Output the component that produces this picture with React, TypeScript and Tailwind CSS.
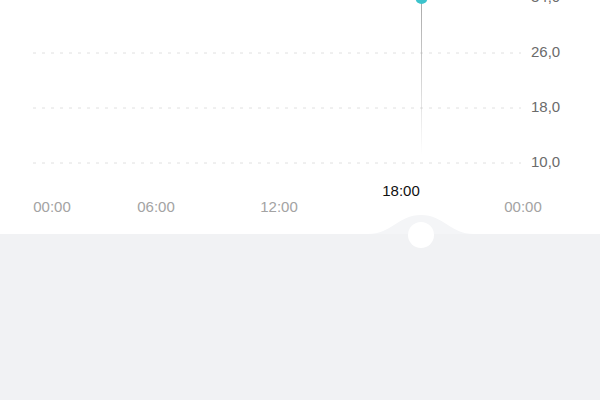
const yLabels = ['34,0', '26,0', '18,0', '10,0']

const xLabels = [
  { t: '00:00', ml: 'ml-[12px]' },
  { t: '06:00', ml: 'ml-[24px]' },
  { t: '12:00', ml: 'ml-[43px]' },
  { t: '18:00', ml: 'ml-[42px]', active: true },
  { t: '00:00', ml: 'ml-[42px]' },
]

export default function App() {
  return (
    <div className="w-[600px] h-[400px] overflow-hidden bg-white flex flex-col" style={{ fontFamily: '"Liberation Sans", Arial, sans-serif' }}>
      {/* Chart */}
      <div className="relative h-[186px] shrink-0 overflow-hidden">
        <div className="flex flex-col -mt-[30px]">
          {yLabels.map((l) => (
            <div key={l} className="h-[55px] flex items-center pl-[33px]">
              <svg width="488" height="2" className="shrink-0">
                <line x1="0" y1="1" x2="488" y2="1" stroke="#e0e0e0" strokeWidth="1" strokeDasharray="3 6" />
              </svg>
              <span className="ml-[10px] text-[15px] text-[#6b6b6b]">{l}</span>
            </div>
          ))}
        </div>
        <svg className="absolute left-[410px] top-0" width="24" height="160">
          <defs>
            <linearGradient id="vl" x1="0" y1="0" x2="0" y2="1">
              <stop offset="0" stopColor="#a8a8a8" />
              <stop offset="1" stopColor="#a8a8a8" stopOpacity="0" />
            </linearGradient>
          </defs>
          <rect x="11" y="0" width="1" height="155" fill="url(#vl)" />
          <circle cx="11.5" cy="-2" r="6" fill="#3cc3cc" />
        </svg>
      </div>

      {/* X axis */}
      <div className="flex h-[48px] items-start text-[15px]">
        {xLabels.map((x, i) => (
          <span
            key={i}
            className={`${x.ml} w-[80px] text-center ${x.active ? 'mt-[-6px] text-[#111]' : 'mt-[10px] text-[#a3a3a3]'}`}
          >
            {x.t}
          </span>
        ))}
      </div>

      {/* Bottom panel */}
      <div className="relative flex-1 bg-[#f1f2f4]">
        <svg className="absolute left-[368px] -top-[20px]" width="106" height="40">
          <path d="M0 20 C 24 20, 30 1, 53 1 C 76 1, 82 20, 106 20 Z" fill="#f4f5f7" />
          <circle cx="53" cy="21" r="13" fill="#ffffff" />
        </svg>
      </div>
    </div>
  )
}
